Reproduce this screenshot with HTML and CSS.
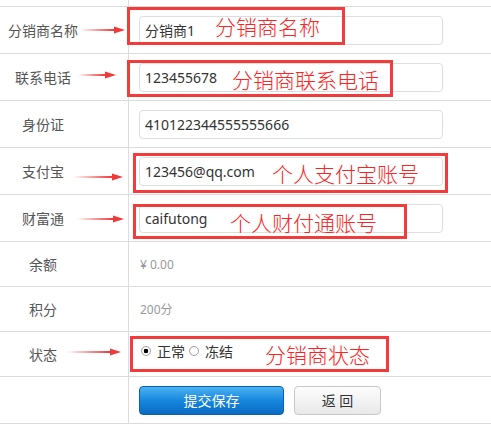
FILE: index.html
```html
<!DOCTYPE html>
<html>
<head>
    <meta charset="UTF-8">
    <title>分销商信息</title>
    <link rel="stylesheet" href="styles.css">
</head>
<body>
<div class="form">
    <div class="row row-top">
        <div class="label"></div>
        <div class="field"></div>
    </div>

    <div class="row">
        <div class="label">分销商名称</div>
        <div class="field"><input class="text" type="text" value="分销商1"></div>
        <svg class="arrow arrow-1" width="45" height="8"><polygon points="0,4 34,3 34,0.5 45,4 34,7.5 34,5"/></svg>
        <div class="note note-1">分销商名称</div>
    </div>

    <div class="row">
        <div class="label">联系电话</div>
        <div class="field"><input class="text" type="text" value="123455678"></div>
        <svg class="arrow arrow-2" width="38" height="8"><polygon points="0,4 27,3 27,0.5 38,4 27,7.5 27,5"/></svg>
        <div class="note note-2">分销商联系电话</div>
    </div>

    <div class="row">
        <div class="label">身份证</div>
        <div class="field"><input class="text" type="text" value="410122344555555666"></div>
    </div>

    <div class="row">
        <div class="label">支付宝</div>
        <div class="field"><input class="text" type="text" value="123456@qq.com"></div>
        <svg class="arrow arrow-4" width="50" height="8"><polygon points="0,4 39,3 39,0.5 50,4 39,7.5 39,5"/></svg>
        <div class="note note-4">个人支付宝账号</div>
    </div>

    <div class="row">
        <div class="label">财富通</div>
        <div class="field"><input class="text" type="text" value="caifutong"></div>
        <svg class="arrow arrow-5" width="47" height="8"><polygon points="0,4 36,3 36,0.5 47,4 36,7.5 36,5"/></svg>
        <div class="note note-5">个人财付通账号</div>
    </div>

    <div class="row row-short">
        <div class="label">余额</div>
        <div class="field value">¥ 0.00</div>
    </div>

    <div class="row row-short">
        <div class="label">积分</div>
        <div class="field value">200分</div>
    </div>

    <div class="row row-short">
        <div class="label">状态</div>
        <div class="field radios">
            <input class="radio" type="radio" name="status" checked> <span>正常</span>
            <input class="radio" type="radio" name="status"> <span>冻结</span>
        </div>
        <svg class="arrow arrow-8" width="54" height="8"><polygon points="0,4 43,3 43,0.5 54,4 43,7.5 43,5"/></svg>
        <div class="note note-8">分销商状态</div>
    </div>

    <div class="row">
        <div class="label"></div>
        <div class="field buttons">
            <button type="submit" class="btn-save">提交保存</button>
            <button type="button" class="btn-back">返 回</button>
        </div>
    </div>
</div>
</body>
</html>
```

FILE: styles.css
```css
body {
    margin: 0;
    background-color: #fff;
    font-family: "Noto Sans", "Noto Sans CJK SC", sans-serif;
    font-size: 14px;
    color: #555;
}
.form {
    width: 491px;
}
.row {
    position: relative;
    display: flex;
    height: 47px;
    box-sizing: border-box;
    border-bottom: 1px solid #dcdcdc;
}
.row-top {
    height: 7px;
}
.row-short {
    height: 45px;
}
.label {
    width: 129px;
    flex: none;
    box-sizing: border-box;
    padding-right: 42px;
    border-right: 1px solid #dcdcdc;
    text-align: center;
    display: flex;
    align-items: center;
    justify-content: center;
    color: #555;
}
.field {
    flex: 1;
    display: flex;
    align-items: center;
    padding-left: 10px;
}
.text {
    width: 304px;
    height: 29px;
    box-sizing: border-box;
    border: 1px solid #dedede;
    border-radius: 4px;
    padding: 0 5px;
    font-family: "Noto Sans", "Noto Sans CJK SC", sans-serif;
    font-size: 14px;
    color: #333;
    outline: none;
}
.value {
    padding-left: 11px;
    font-size: 12px;
    color: #999;
}
.radios {
    padding-bottom: 6px;
    color: #333;
}
.radio {
    appearance: none;
    -webkit-appearance: none;
    width: 10px;
    height: 10px;
    margin: 0 0 0 4px;
    border: 1px solid #a0a0a0;
    border-radius: 50%;
    background: #fff;
}
.radio:first-child {
    margin-left: 2px;
}
.radio:checked {
    background: radial-gradient(circle, #000 0 2px, #fff 2.6px);
}
.radios span {
    margin-left: 6px;
}
.buttons {
    gap: 10px;
}
.buttons button {
    height: 29px;
    border-radius: 4px;
    font-family: "Noto Sans", "Noto Sans CJK SC", sans-serif;
    font-size: 14px;
    cursor: pointer;
}
.btn-save {
    width: 145px;
    border: 1px solid #0b60ab;
    background: linear-gradient(#4bb2f2, #1787de 50%, #0a6bc3);
    color: #fff;
}
.btn-back {
    width: 87px;
    border: 1px solid #c8c8c8;
    background: linear-gradient(#fdfdfd, #e8e8e8);
    color: #333;
}

/* annotations drawn over the form */
.arrow {
    position: absolute;
    fill: #f03a3a;
}
.arrow-1 { left: 80px; top: 19px; }
.arrow-2 { left: 78px; top: 17px; }
.arrow-4 { left: 73px; top: 25px; }
.arrow-5 { left: 77px; top: 20px; }
.arrow-8 { left: 67px; top: 16px; }
.note {
    position: absolute;
    box-sizing: border-box;
    border: 3px solid #f23c3c;
    display: flex;
    align-items: center;
    font-family: "Noto Sans CJK SC", sans-serif;
    font-size: 21px;
    font-weight: 300;
    color: #ff2222;
    white-space: nowrap;
}
.note-1 { left: 127px; top: 0; width: 218px; height: 38px; padding-left: 85px; }
.note-2 { left: 127px; top: 6px; width: 266px; height: 37px; padding-left: 102px; }
.note-4 { left: 133px; top: 5px; width: 315px; height: 40px; padding-left: 136px; }
.note-5 { left: 133px; top: 9px; width: 274px; height: 35px; padding-left: 94px; }
.note-8 { left: 130px; top: 4px; width: 259px; height: 36px; padding-left: 132px; }
```
